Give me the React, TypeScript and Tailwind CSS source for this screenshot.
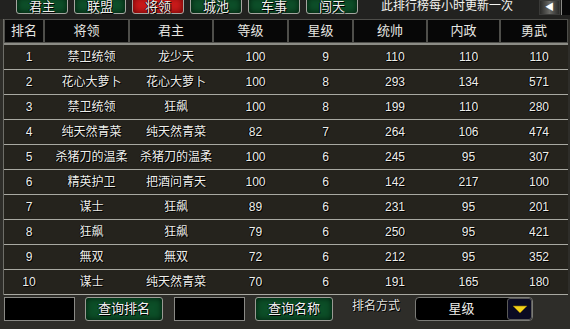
import React from "react";

const tabs = ["君主", "联盟", "将领", "城池", "车事", "闯天"];
const headers = ["排名", "将领", "君主", "等级", "星级", "统帅", "内政", "勇武"];

const rows = [
  ["1", "禁卫统领", "龙少天", "100", "9", "110", "110", "110"],
  ["2", "花心大萝卜", "花心大萝卜", "100", "8", "293", "134", "571"],
  ["3", "禁卫统领", "狂飙", "100", "8", "199", "110", "280"],
  ["4", "纯天然青菜", "纯天然青菜", "82", "7", "264", "106", "474"],
  ["5", "杀猪刀的温柔", "杀猪刀的温柔", "100", "6", "245", "95", "307"],
  ["6", "精英护卫", "把酒问青天", "100", "6", "142", "217", "100"],
  ["7", "谋士", "狂飙", "89", "6", "231", "95", "201"],
  ["8", "狂飙", "狂飙", "79", "6", "250", "95", "421"],
  ["9", "無双", "無双", "72", "6", "212", "95", "352"],
  ["10", "谋士", "纯天然青菜", "70", "6", "191", "165", "180"],
];

const cols = "grid grid-cols-[40px_85px_84px_75px_65px_74px_73px_68px]";
const shadow = "[text-shadow:1px_1px_0_#000,-1px_0_0_#000]";

const GreenButton = ({ label, className = "" }: { label: string; className?: string }) => (
  <div
    className={`flex items-center justify-center rounded-[3px] border border-[#9a9a94] bg-[#0c4f28] shadow-[inset_0_0_6px_#021a0c] text-[13px] text-[#f2f2f2] ${shadow} ${className}`}
  >
    {label}
  </div>
);

export default function App() {
  return (
    <div className="w-[570px] h-[329px] overflow-hidden bg-[#2e2d29] font-['Liberation_Sans','Noto_Sans_CJK_SC',sans-serif] text-[12px] text-[#eeeeea]">
      {/* top tabs */}
      <div className="flex h-[19px] overflow-hidden bg-[#222220]">
        <div className="flex gap-[6px] pl-[16px]">
          {tabs.map((t) => (
            <div
              key={t}
              className={`-mt-[4px] flex h-[18px] w-[52px] items-center justify-center rounded-[3px] border border-[#a5a5a0] pt-[3px] text-[13px] leading-[13px] ${shadow} ${
                t === "将领"
                  ? "bg-[#c81a1a] shadow-[inset_0_0_6px_#5a0000]"
                  : "bg-[#0d4f29] shadow-[inset_0_0_6px_#02190b]"
              }`}
            >
              {t}
            </div>
          ))}
        </div>
        <div className="ml-[23px] w-[150px] text-[12px] leading-[12px] text-[#f4f4f0]">此排行榜每小时更新一次</div>
        <div className="ml-[8px] flex h-[15px] w-[21px] items-center justify-center border border-[#3a3a38] bg-linear-to-r from-[#2a2a28] via-[#6a6a66] to-[#2a2a28] text-[9px] text-white">
          ◀
        </div>
        <div className="ml-[1px] h-[15px] flex-1 border-l border-[#8a8a86] bg-[#080808]" />
      </div>

      {/* table */}
      <div className="ml-[3px] w-[565px] border-l border-[#6e6e68]">
        <div className={`${cols} h-[26px] border-b-2 border-[#8c8c86] bg-[#3a3a37]`}>
          {headers.map((h) => (
            <div
              key={h}
              className="flex items-center justify-center border border-[#4e4e4a] bg-[#070707] text-[13px] text-[#e6e6e2]"
            >
              {h}
            </div>
          ))}
        </div>
        {rows.map((r) => (
          <div key={r[0]} className={`${cols} h-[25px] border-b border-[#a9a9a2] bg-[#25231d]`}>
            {r.map((c, i) => (
              <div key={i} className={`flex items-center justify-center pl-[10px] ${shadow}`}>
                {c}
              </div>
            ))}
          </div>
        ))}
      </div>

      {/* bottom controls */}
      <div className="flex items-center pl-[4px] pt-[2px]">
        <div className="h-[24px] w-[71px] border border-[#8a8a86] bg-black" />
        <GreenButton label="查询排名" className="ml-[10px] h-[24px] w-[78px]" />
        <div className="ml-[11px] h-[24px] w-[71px] border border-[#8a8a86] bg-black" />
        <GreenButton label="查询名称" className="ml-[10px] h-[24px] w-[78px]" />
        <div className={`-mt-[6px] ml-[19px] text-[12px] text-[#e4e4e0] ${shadow}`}>排名方式</div>
        <div className="ml-[15px] flex h-[24px] w-[118px] items-center rounded-[4px] border border-[#7a7a76] bg-black">
          <div className={`flex-1 text-center text-[13px] ${shadow}`}>星级</div>
          <div className="flex h-[22px] w-[25px] items-center justify-center rounded-[3px] border border-[#5a5a58] bg-[#0b0b22]">
            <svg width="16" height="9" viewBox="0 0 16 9">
              <polygon points="1,1 15,1 8,8" fill="#f3d21a" stroke="#8a6a00" strokeWidth="0.6" />
            </svg>
          </div>
        </div>
      </div>
    </div>
  );
}
